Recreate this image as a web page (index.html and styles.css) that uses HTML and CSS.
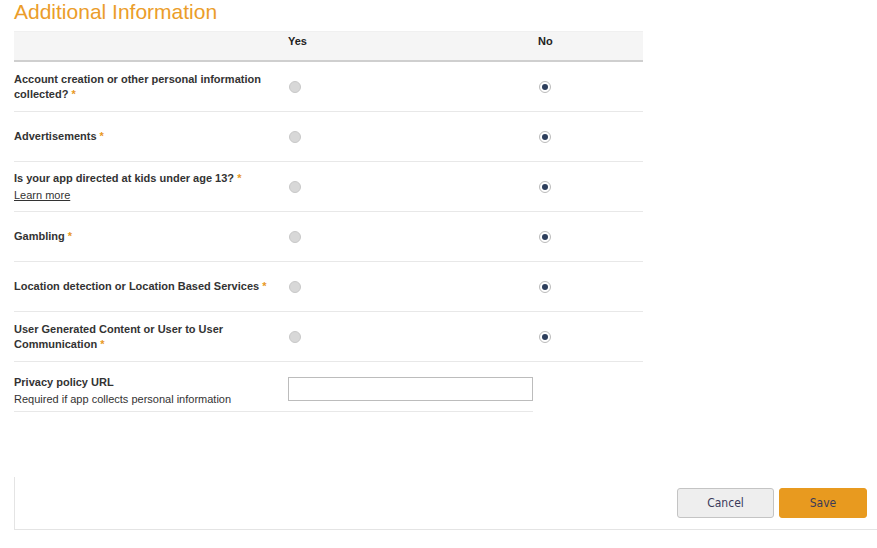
FILE: index.html
```html
<!DOCTYPE html>
<html>
<head>
<meta charset="utf-8">
<link rel="stylesheet" href="styles.css">
</head>
<body>
<h1 class="title">Additional Information</h1>
<div class="grid">
  <div class="head">
    <div class="c-label"></div>
    <div class="c-yes">Yes</div>
    <div class="c-no">No</div>
  </div>
  <div class="row">
    <div class="c-label">Account creation or other personal information collected? <span class="req">*</span></div>
    <div class="c-yes"><span class="radio"></span></div>
    <div class="c-no"><span class="radio on"></span></div>
  </div>
  <div class="row">
    <div class="c-label">Advertisements <span class="req">*</span></div>
    <div class="c-yes"><span class="radio"></span></div>
    <div class="c-no"><span class="radio on"></span></div>
  </div>
  <div class="row">
    <div class="c-label">Is your app directed at kids under age 13? <span class="req">*</span><a class="learn" href="#">Learn more</a></div>
    <div class="c-yes"><span class="radio"></span></div>
    <div class="c-no"><span class="radio on"></span></div>
  </div>
  <div class="row">
    <div class="c-label">Gambling <span class="req">*</span></div>
    <div class="c-yes"><span class="radio"></span></div>
    <div class="c-no"><span class="radio on"></span></div>
  </div>
  <div class="row">
    <div class="c-label">Location detection or Location Based Services <span class="req">*</span></div>
    <div class="c-yes"><span class="radio"></span></div>
    <div class="c-no"><span class="radio on"></span></div>
  </div>
  <div class="row">
    <div class="c-label">User Generated Content or User to User Communication <span class="req">*</span></div>
    <div class="c-yes"><span class="radio"></span></div>
    <div class="c-no"><span class="radio on"></span></div>
  </div>
  <div class="row privacy">
    <div class="c-label">Privacy policy URL<span class="hint">Required if app collects personal information</span></div>
    <div class="c-input"><input class="url" type="text"></div>
  </div>
</div>
<div class="footer">
  <button class="btn cancel">Cancel</button>
  <button class="btn save">Save</button>
</div>
</body>
</html>
```
FILE: styles.css
```css
html, body {
  margin: 0;
  padding: 0;
  background: #fff;
}
body {
  padding: 0 0 0 14px;
  font-family: "Liberation Sans", Arial, sans-serif;
  color: #333;
  overflow: hidden;
}
.title {
  margin: 0 0 7px 0;
  font-size: 21px;
  line-height: 24px;
  font-weight: normal;
  color: #eb9d2a;
  font-family: "Liberation Sans", Arial, sans-serif;
}
.grid {
  width: 629px;
}
.head, .row {
  display: grid;
  grid-template-columns: 274px 250px 105px;
  align-items: center;
}
.head {
  background: #f5f5f5;
  border-top: 1px solid #f0f0f0;
  border-bottom: 2px solid #cfcfcf;
  box-sizing: border-box;
  height: 31px;
  font-size: 11px;
  font-weight: bold;
  color: #222;
  align-items: start;
  padding-top: 3px;
}
.row {
  height: 50px;
  border-bottom: 1px solid #e8e8e8;
  box-sizing: border-box;
  font-size: 11px;
  font-weight: bold;
}
.c-label {
  line-height: 15px;
  padding-right: 10px;
}
.req {
  color: #e8991f;
}
.learn {
  display: block;
  color: #333;
  font-weight: normal;
  text-decoration: underline;
  margin-top: 2px;
}
.radio {
  display: block;
  width: 10px;
  height: 10px;
  border-radius: 50%;
  background: #d8d8d8;
  border: 1px solid #c8c8c8;
  margin-left: 1px;
  margin-top: 1px;
}
.radio.on {
  background: #fff;
  border: 1px solid #bbb;
  position: relative;
}
.radio.on::after {
  content: "";
  position: absolute;
  left: 2px;
  top: 2px;
  width: 6px;
  height: 6px;
  border-radius: 50%;
  background: #2c3e5c;
}
.privacy {
  width: 519px;
  grid-template-columns: 274px 245px;
  padding-top: 9px;
}
.hint {
  display: block;
  font-weight: normal;
  margin-top: 2px;
}
.url {
  display: block;
  width: 245px;
  height: 24px;
  box-sizing: border-box;
  border: 1px solid #bcbcbc;
  margin: 0 0 4px 0;
  padding: 0;
}
.footer {
  margin-top: 65px;
  height: 53px;
  border-left: 1px solid #e4e4e4;
  border-bottom: 1px solid #e4e4e4;
  display: flex;
  justify-content: flex-end;
  align-items: flex-start;
  gap: 5px;
  padding: 11px 10px 0 0;
  box-sizing: border-box;
}
.btn {
  height: 30px;
  border-radius: 3px;
  font-family: "DejaVu Sans Condensed", "Liberation Sans", sans-serif;
  font-size: 12px;
  color: #3a3a5a;
  cursor: pointer;
}
.cancel {
  width: 97px;
  background: #eeeeee;
  border: 1px solid #c4c4c4;
}
.save {
  width: 88px;
  background: #e89a1f;
  border: 1px solid #e89a1f;
}
```
